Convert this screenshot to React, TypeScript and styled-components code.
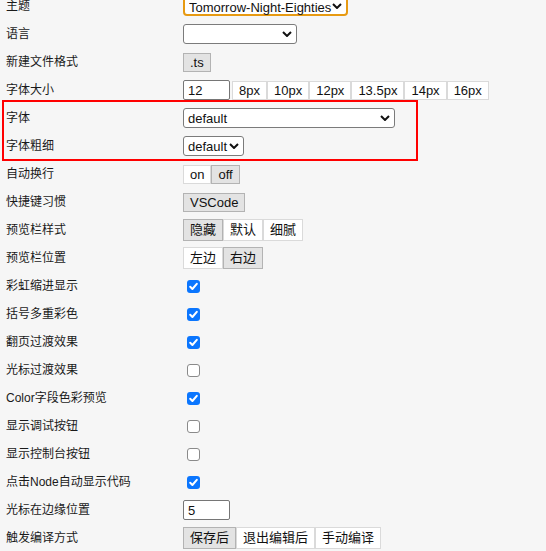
import React from 'react';
import styled, { createGlobalStyle } from 'styled-components';

const GlobalStyle = createGlobalStyle`
  html, body {
    margin: 0;
    padding: 0;
    background: #f6f6f6;
    overflow: hidden;
  }
  body {
    font-family: "Liberation Sans", Arial, "Noto Sans CJK SC", sans-serif;
    color: #1a1a1a;
  }
`;

const Page = styled.div`
  position: relative;
  margin-top: -8px;
  padding-left: 6px;
`;

const Row = styled.div`
  display: grid;
  grid-template-columns: 177px 1fr;
  align-items: center;
  height: 28px;
`;

const Label = styled.div`
  font-size: 12px;
  line-height: 16px;
  white-space: nowrap;
`;

const Controls = styled.div`
  display: flex;
  align-items: center;
`;

const SelectBox = styled.div<{ $width: number; $focused?: boolean }>`
  position: relative;
  box-sizing: border-box;
  width: ${({ $width }) => $width}px;
  height: 20px;
  background: #fff;
  border: ${({ $focused }) => ($focused ? '2px solid #e79a12' : '1px solid #7b7b7b')};
  border-radius: ${({ $focused }) => ($focused ? 4 : 3)}px;
`;

const NativeSelect = styled.select`
  appearance: none;
  -webkit-appearance: none;
  width: 100%;
  height: 100%;
  margin: 0;
  border: none;
  outline: none;
  background: transparent;
  padding: 0 10px 0 4px;
  font: 13px/16px "Liberation Sans", Arial, sans-serif;
  color: #111;
`;

const Chevron = styled.svg`
  position: absolute;
  right: 4px;
  top: 50%;
  margin-top: -3px;
  pointer-events: none;
`;

const NumberInput = styled.input`
  box-sizing: border-box;
  width: 47px;
  height: 20px;
  margin: 0 2px 0 0;
  padding: 0 4px;
  border: 1px solid #767676;
  border-radius: 2px;
  background: #fff;
  font: 13px/16px "Liberation Sans", Arial, sans-serif;
  color: #111;
  outline: none;
`;

const Group = styled.div`
  display: flex;
  align-items: center;
`;

const OptionButton = styled.button<{ $active?: boolean; $cjk?: boolean }>`
  margin: 0;
  padding: ${({ $cjk }) => ($cjk ? '2px 6px' : '1px 6px 0')};
  font: 13px/16px "Liberation Sans", Arial, "Noto Sans CJK SC", sans-serif;
  color: #111;
  border: 1px solid ${({ $active }) => ($active ? '#b3b3b3' : '#dadada')};
  border-radius: 0;
  background: ${({ $active }) => ($active ? '#e3e3e3' : '#fff')};
  cursor: pointer;
`;

const CheckBox = styled.span<{ $checked?: boolean }>`
  box-sizing: border-box;
  display: flex;
  align-items: center;
  justify-content: center;
  width: 13px;
  height: 13px;
  margin-left: 4px;
  border-radius: 3px;
  background: ${({ $checked }) => ($checked ? '#0b76fe' : '#fff')};
  border: ${({ $checked }) => ($checked ? 'none' : '1px solid #8a8a8a')};
`;

const Highlight = styled.div`
  position: absolute;
  left: 2px;
  top: 108px;
  width: 416px;
  height: 61px;
  box-sizing: border-box;
  border: 2px solid #ff0000;
  pointer-events: none;
`;

const Select: React.FC<{ width: number; value: string; focused?: boolean }> = ({ width, value, focused }) => (
  <SelectBox $width={width} $focused={focused}>
    <NativeSelect value={value} onChange={() => {}}>
      <option value={value}>{value}</option>
    </NativeSelect>
    <Chevron width="10" height="6" viewBox="0 0 10 6">
      <polyline points="1,1 5,5 9,1" fill="none" stroke="#111" strokeWidth="2" />
    </Chevron>
  </SelectBox>
);

const Options: React.FC<{ items: string[]; active: number; cjk?: boolean }> = ({ items, active, cjk }) => (
  <Group>
    {items.map((item, i) => (
      <OptionButton key={item} $active={i === active} $cjk={cjk}>
        {item}
      </OptionButton>
    ))}
  </Group>
);

const Check: React.FC<{ checked?: boolean }> = ({ checked }) => (
  <CheckBox $checked={checked}>
    {checked && (
      <svg width="13" height="13" viewBox="0 0 13 13">
        <polyline points="3.2,6.8 5.4,9 9.8,3.8" fill="none" stroke="#fff" strokeWidth="2" strokeLinecap="round" strokeLinejoin="round" />
      </svg>
    )}
  </CheckBox>
);

const checks: [string, boolean][] = [
  ['彩虹缩进显示', true],
  ['括号多重彩色', true],
  ['翻页过渡效果', true],
  ['光标过渡效果', false],
  ['Color字段色彩预览', true],
  ['显示调试按钮', false],
  ['显示控制台按钮', false],
  ['点击Node自动显示代码', true],
];

export default function App() {
  return (
    <>
      <GlobalStyle />
      <Page>
        <Row>
          <Label>主题</Label>
          <Controls>
            <Select width={165} value="Tomorrow-Night-Eighties" focused />
          </Controls>
        </Row>
        <Row>
          <Label>语言</Label>
          <Controls>
            <Select width={114} value="" />
          </Controls>
        </Row>
        <Row>
          <Label>新建文件格式</Label>
          <Controls>
            <Options items={['.ts']} active={0} />
          </Controls>
        </Row>
        <Row>
          <Label>字体大小</Label>
          <Controls>
            <NumberInput defaultValue="12" />
            <Options items={['8px', '10px', '12px', '13.5px', '14px', '16px']} active={-1} />
          </Controls>
        </Row>
        <Row>
          <Label>字体</Label>
          <Controls>
            <Select width={212} value="default" />
          </Controls>
        </Row>
        <Row>
          <Label>字体粗细</Label>
          <Controls>
            <Select width={61} value="default" />
          </Controls>
        </Row>
        <Row>
          <Label>自动换行</Label>
          <Controls>
            <Options items={['on', 'off']} active={1} />
          </Controls>
        </Row>
        <Row>
          <Label>快捷键习惯</Label>
          <Controls>
            <Options items={['VSCode']} active={0} />
          </Controls>
        </Row>
        <Row>
          <Label>预览栏样式</Label>
          <Controls>
            <Options items={['隐藏', '默认', '细腻']} active={0} cjk />
          </Controls>
        </Row>
        <Row>
          <Label>预览栏位置</Label>
          <Controls>
            <Options items={['左边', '右边']} active={1} cjk />
          </Controls>
        </Row>
        {checks.map(([label, checked]) => (
          <Row key={label}>
            <Label>{label}</Label>
            <Controls>
              <Check checked={checked} />
            </Controls>
          </Row>
        ))}
        <Row>
          <Label>光标在边缘位置</Label>
          <Controls>
            <NumberInput defaultValue="5" />
          </Controls>
        </Row>
        <Row>
          <Label>触发编译方式</Label>
          <Controls>
            <Options items={['保存后', '退出编辑后', '手动编译']} active={0} cjk />
          </Controls>
        </Row>
        <Highlight />
      </Page>
    </>
  );
}
